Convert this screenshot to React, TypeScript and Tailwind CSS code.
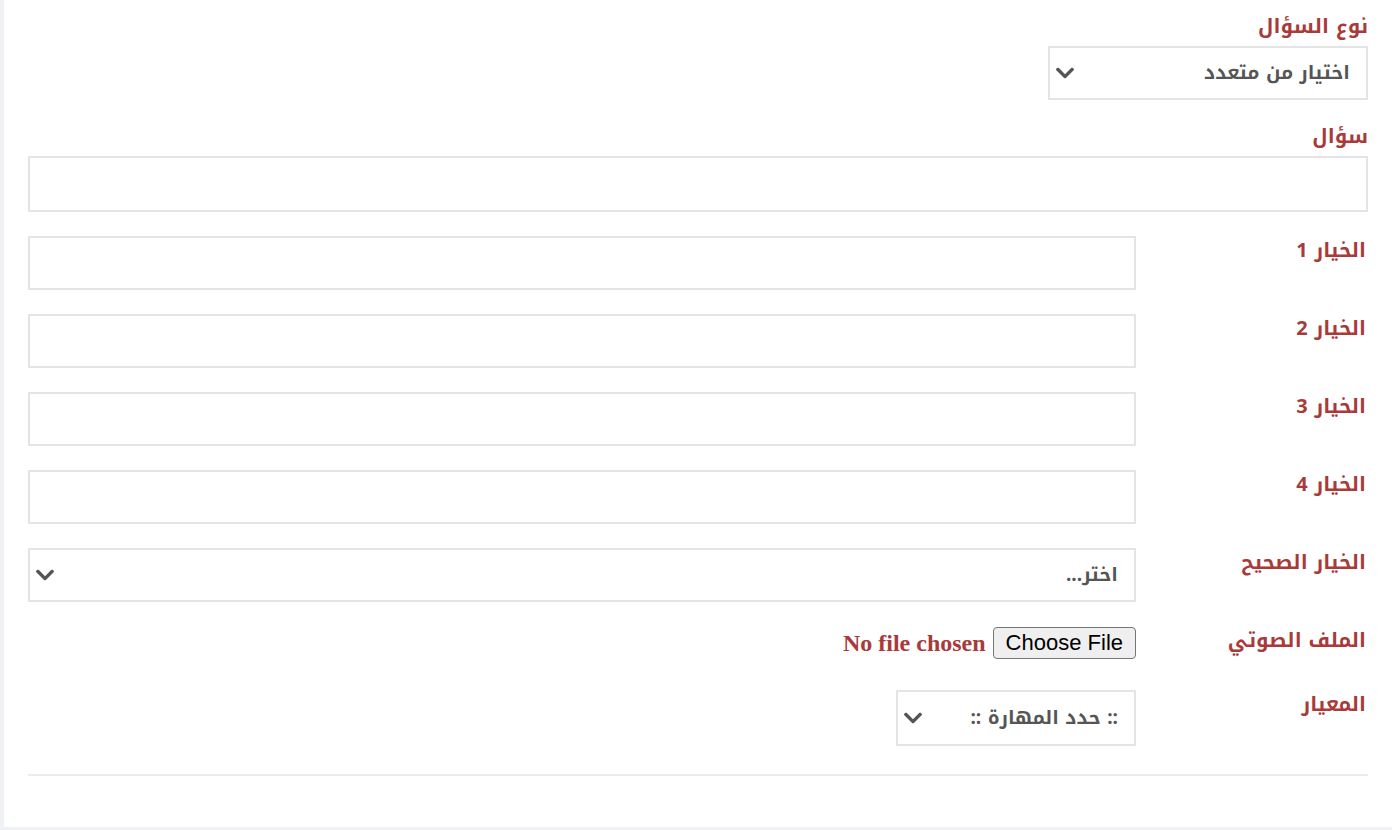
import { useState } from "react";

const arabic = "font-['Noto_Kufi_Arabic','Noto_Sans_Arabic','DejaVu_Sans',sans-serif]";

function Chevron() {
  return (
    <svg viewBox="5 124 438 264" className="w-[18px] h-[11px] fill-[#555555]">
      <path d="M207.029 381.476L12.686 187.132c-9.373-9.373-9.373-24.569 0-33.941l22.667-22.667c9.357-9.357 24.522-9.375 33.901-.04L224 284.505l154.745-154.021c9.379-9.335 24.544-9.317 33.901.04l22.667 22.667c9.373 9.373 9.373 24.569 0 33.941L240.971 381.476c-9.373 9.372-24.569 9.372-33.942 0z" />
    </svg>
  );
}

function SelectBox({ value, options, className }: { value: string; options: string[]; className: string }) {
  const [val, setVal] = useState(value);
  return (
    <div className={`relative ${className}`}>
      <select
        value={val}
        onChange={(e) => setVal(e.target.value)}
        className={`appearance-none w-full h-full bg-white border-2 border-[#e4e4e4] pr-[16px] pl-[36px] text-[19px] font-bold text-[#555555] outline-none ${arabic}`}
      >
        {options.map((o) => (
          <option key={o}>{o}</option>
        ))}
      </select>
      <span className="pointer-events-none absolute left-[8px] top-1/2 -translate-y-1/2 flex">
        <Chevron />
      </span>
    </div>
  );
}

function Label({ text }: { text: string }) {
  return <label className={`block text-[20px] leading-[28px] font-bold text-[#a93a3a] ${arabic}`}>{text}</label>;
}

function TextRow({ label }: { label: string }) {
  return (
    <div className="flex items-start mt-[24px]">
      <div className="w-[232px] pr-[2px]">
        <Label text={label} />
      </div>
      <input type="text" className="w-[1108px] h-[54px] border-2 border-[#e4e4e4] bg-white outline-none px-3" />
    </div>
  );
}

export default function App() {
  return (
    <div dir="rtl" className="h-[830px] bg-[#eff1f5] pl-[4px] pb-[3px]">
      <div className="bg-white h-[827px] px-[24px] pt-[12px]">
        {/* Question type */}
        <Label text="نوع السؤال" />
        <SelectBox
          value="اختيار من متعدد"
          options={["اختيار من متعدد", "صح أو خطأ"]}
          className="w-[320px] h-[54px] mt-[6px]"
        />

        {/* Question */}
        <div className="mt-[22px]">
          <Label text="سؤال" />
        </div>
        <input type="text" className="mt-[6px] w-full h-[56px] border-2 border-[#e4e4e4] bg-white outline-none px-3" />

        {/* Choices */}
        <TextRow label="الخيار 1" />
        <TextRow label="الخيار 2" />
        <TextRow label="الخيار 3" />
        <TextRow label="الخيار 4" />

        {/* Correct choice */}
        <div className="flex items-start mt-[24px]">
          <div className="w-[232px] pr-[2px]">
            <Label text="الخيار الصحيح" />
          </div>
          <SelectBox
            value="اختر..."
            options={["اختر...", "الخيار 1", "الخيار 2", "الخيار 3", "الخيار 4"]}
            className="w-[1108px] h-[54px]"
          />
        </div>

        {/* Audio file */}
        <div className="flex items-start mt-[24px] h-[36px]">
          <div className="w-[232px] pr-[2px]">
            <Label text="الملف الصوتي" />
          </div>
          <div className="flex items-center h-[34px] gap-[7px]">
            <button className="h-[32px] px-[12px] rounded-[4px] border border-[#767676] bg-[#efefef] text-[22px] leading-none text-black font-['Liberation_Sans',Arial,sans-serif]">
              Choose File
            </button>
            <span className="text-[24px] font-bold text-[#a93a3a] font-['Liberation_Serif','Times_New_Roman',serif]" dir="ltr">
              No file chosen
            </span>
          </div>
        </div>

        {/* Standard */}
        <div className="flex items-start mt-[28px]">
          <div className="w-[232px] pr-[2px]">
            <Label text="المعيار" />
          </div>
          <SelectBox value=":: حدد المهارة ::" options={[":: حدد المهارة ::"]} className="w-[240px] h-[56px]" />
        </div>

        <div className="mt-[28px] h-[2px] bg-[#ececec]" />
      </div>
    </div>
  );
}
